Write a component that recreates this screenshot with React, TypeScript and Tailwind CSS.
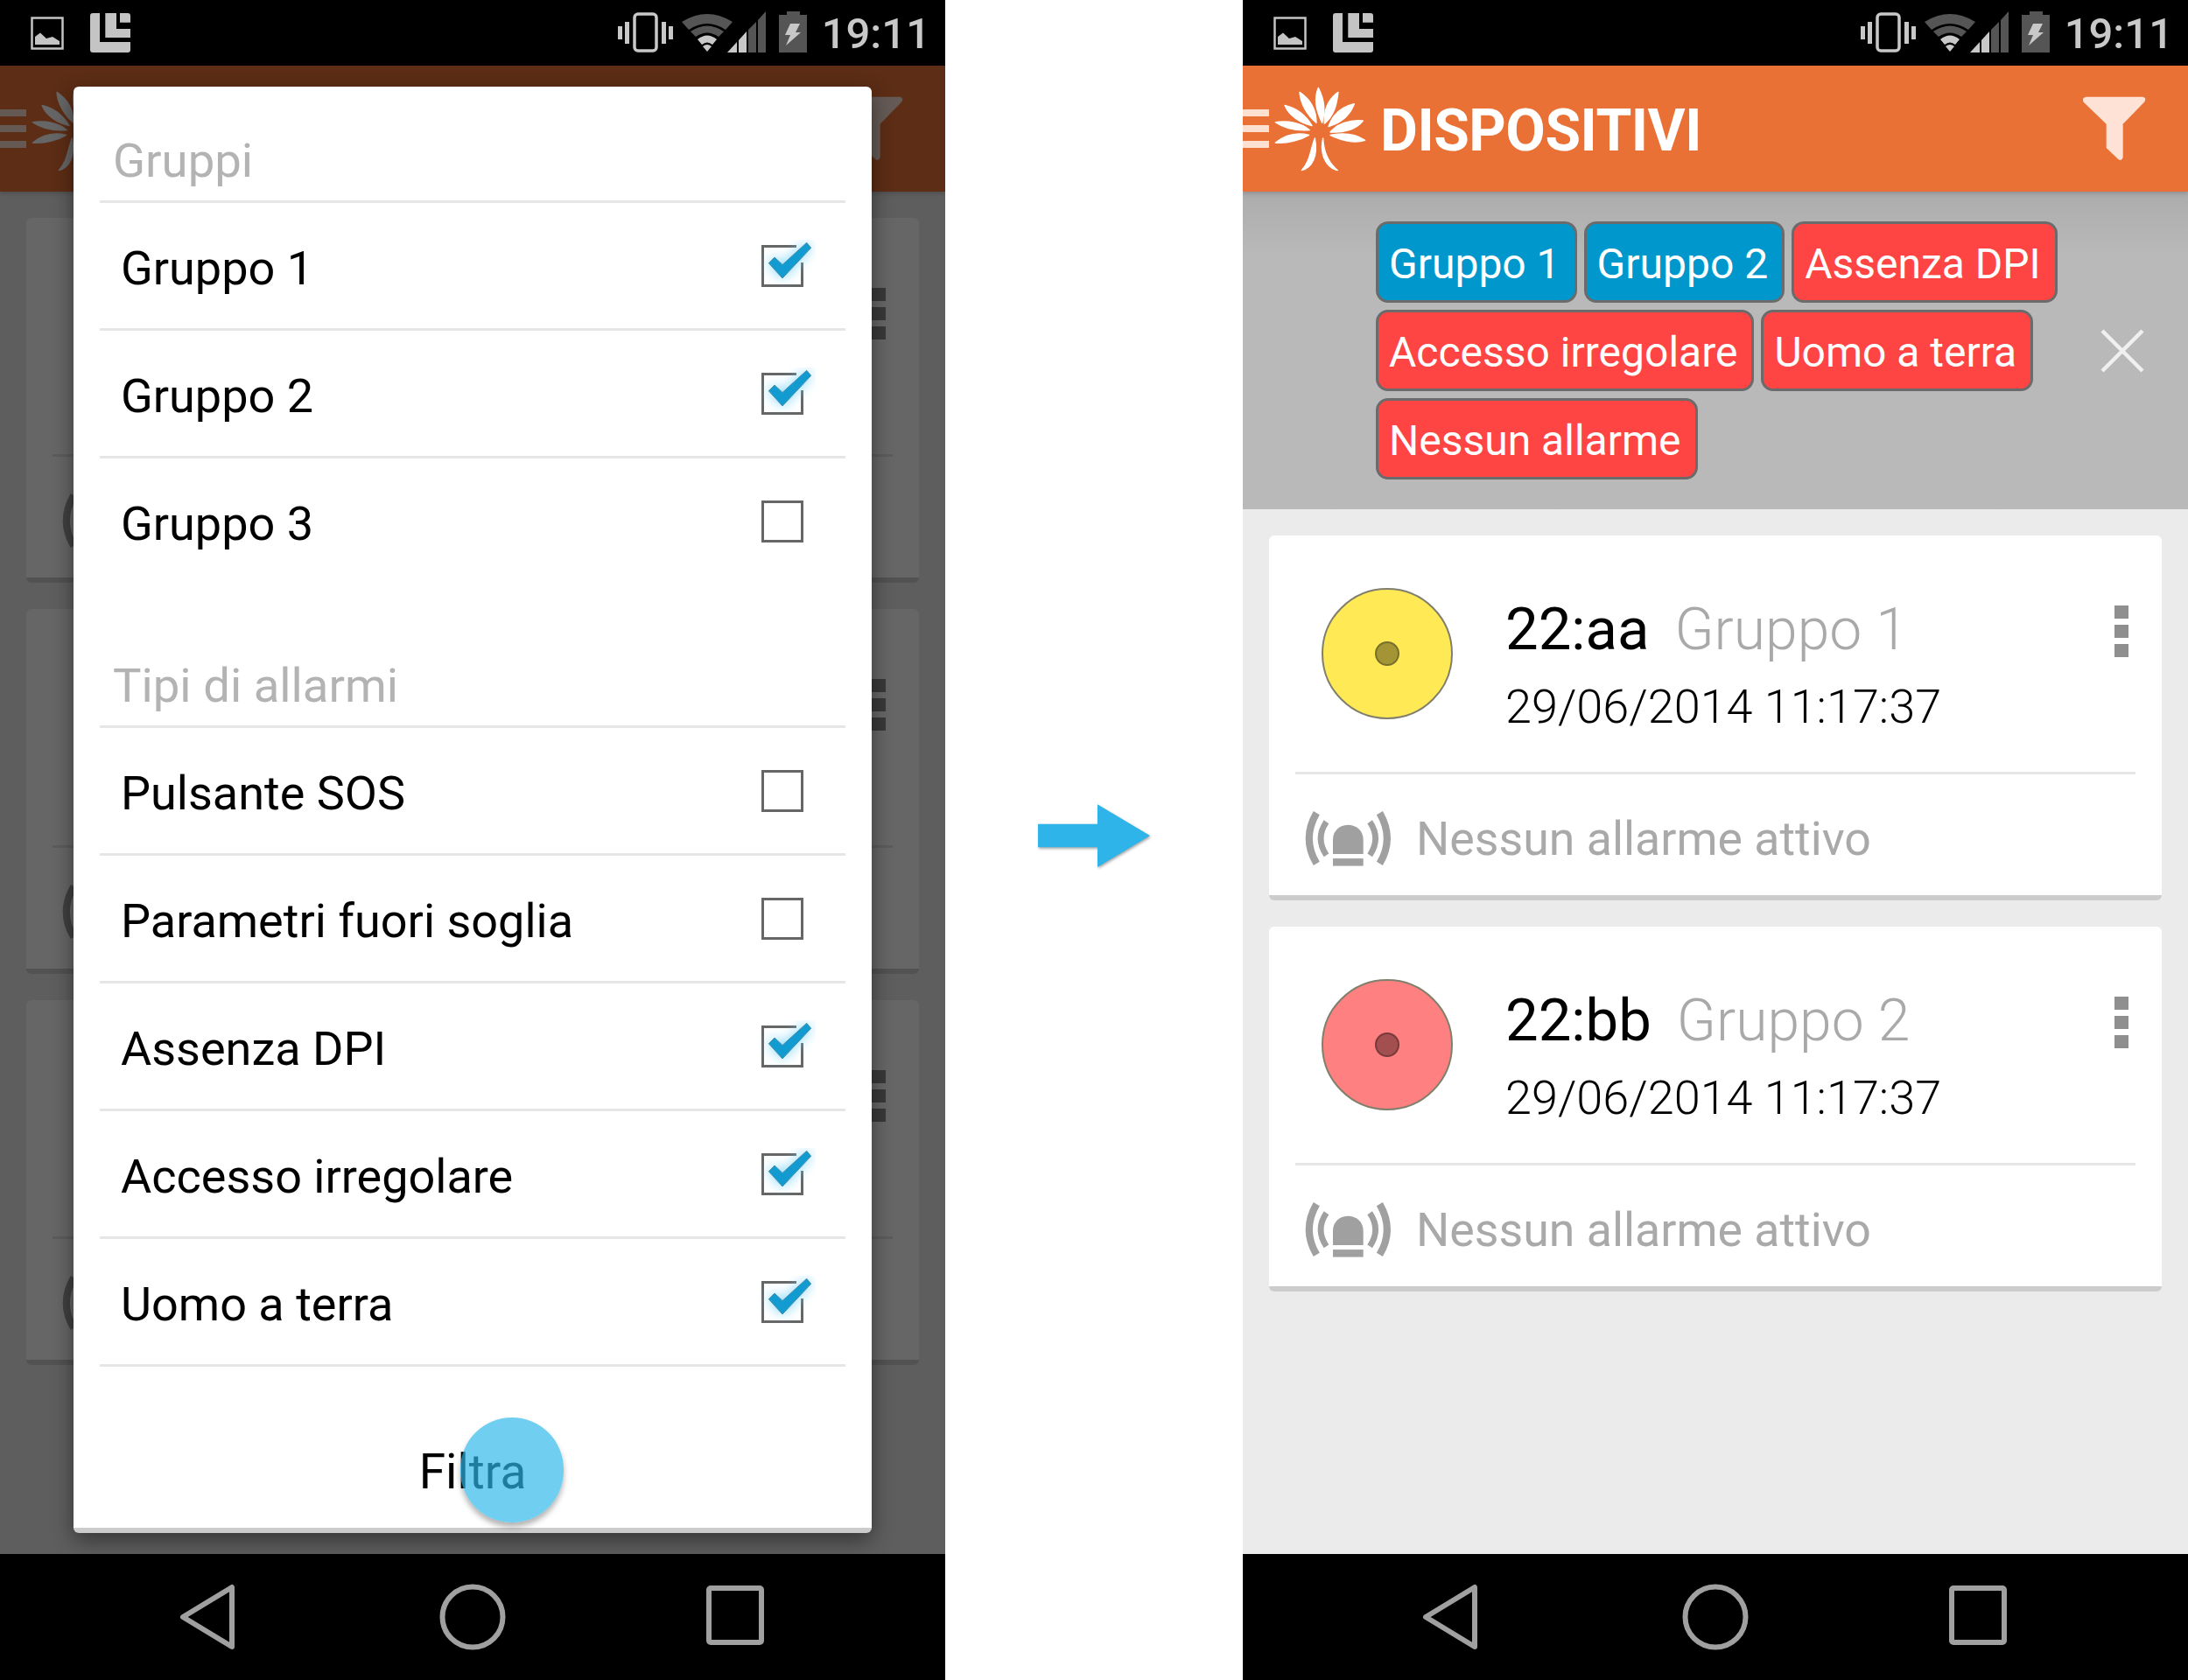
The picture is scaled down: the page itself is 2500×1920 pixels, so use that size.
import React from "react";

const PETALS = [
  "M262 120C245 160 255 200 275 240C285 200 285 165 262 120Z",
  "M198 135C200 175 225 215 255 240C255 195 235 160 198 135Z",
  "M330 135C295 160 280 200 283 243C315 215 325 180 330 135Z",
  "M147 180C160 215 200 240 240 250C220 215 190 190 147 180Z",
  "M385 175C340 185 310 215 297 253C340 240 370 215 385 175Z",
  "M115 238C150 262 195 268 232 265C205 240 160 232 115 238Z",
  "M415 233C370 228 325 245 303 272C345 275 390 265 415 233Z",
  "M115 308C155 312 200 300 230 282C190 272 150 280 115 308Z",
  "M422 300C385 275 340 275 303 282C335 300 385 312 422 300Z",
  "M205 403C240 395 262 355 250 293C235 330 235 370 205 403Z",
  "M328 403C290 395 265 350 278 293C280 340 295 375 328 403Z",
];

function StatusBar() {
  return (
    <div className="h-[75px] shrink-0 bg-black flex items-start">
      {/* picture */}
      <svg className="mt-[19px] ml-[35px]" width="38" height="38" viewBox="0 0 38 38">
        <rect x="1.5" y="1.5" width="35" height="35" fill="none" stroke="#c4c4c4" strokeWidth="2.5" />
        <path d="M5 32V23L11 18.5L18 25L25 23L33 28V32Z" fill="#c4c4c4" />
      </svg>
      {/* L icon */}
      <svg className="mt-[15px] ml-[30px]" width="46" height="45" viewBox="0 0 46 45">
        <path d="M3 0H11V33H46V42Q46 45 43 45H3Q0 45 0 42V3Q0 0 3 0Z" fill="#c4c4c4" />
        <path d="M17.3 0H30V18H46V28H17.3Z" fill="#c4c4c4" />
        <path d="M34 0H43Q46 0 46 3V10.7H34Z" fill="#c4c4c4" />
      </svg>
      <svg className="ml-auto mt-[10px]" width="233" height="54" viewBox="0 0 233 54">
        {/* vibrate */}
        <rect x="19" y="6" width="25" height="42" rx="4" fill="none" stroke="#c8c8c8" strokeWidth="3.5" />
        <rect x="0" y="20" width="5" height="15" fill="#c8c8c8" />
        <rect x="8" y="15" width="5" height="25" fill="#c8c8c8" />
        <rect x="50" y="15" width="5" height="25" fill="#c8c8c8" />
        <rect x="58" y="20" width="5" height="15" fill="#c8c8c8" />
        {/* wifi */}
        <path d="M73 15Q102 -3 131 15L123 24Q102 10 81 24Z" fill="#555" />
        <path d="M83 26Q102 13 121 26L115 32Q102 23 89 32Z" fill="#555" />
        <path d="M91 35Q102 26 113 35L108 41Q102 36 96 41Z" fill="#c8c8c8" />
        <path d="M97 43Q102 39 107 43L102 49Z" fill="#c8c8c8" />
        {/* signal */}
        <path d="M125 50L136 38V50Z" fill="#c8c8c8" />
        <path d="M138 36L147 26V50H138Z" fill="#c8c8c8" />
        <path d="M149 24L158 15V50H149Z" fill="#555" />
        <path d="M160 13L169 3V50H160Z" fill="#555" />
        {/* battery */}
        <path d="M193 7V3H208V7H216V50H184V7Z" fill="#555" />
        <path d="M197 17H208L203 27H209L192 42L197 30H191Z" fill="#c8c8c8" />
      </svg>
      <span className="mr-[17px] mt-[11px] text-[49px] leading-[55px] font-medium text-[#c8c8c8] font-['Roboto',sans-serif]">
        19:11
      </span>
    </div>
  );
}

function NavBar() {
  return (
    <div className="h-[144px] shrink-0 bg-black flex items-center">
      <svg className="ml-[197px]" width="80" height="80" viewBox="0 0 80 80">
        <path d="M68 6V74L12 40Z" fill="none" stroke="#a0a0a0" strokeWidth="6" strokeLinejoin="round" />
      </svg>
      <svg className="ml-[223px]" width="80" height="80" viewBox="0 0 80 80">
        <circle cx="40" cy="40" r="34.5" fill="none" stroke="#a0a0a0" strokeWidth="6" />
      </svg>
      <svg className="ml-[220px]" width="80" height="80" viewBox="0 0 80 80">
        <rect x="10" y="7" width="60" height="62" rx="2" fill="none" stroke="#a0a0a0" strokeWidth="6" />
      </svg>
    </div>
  );
}

function AppHeader({ covered }: { covered?: boolean }) {
  return (
    <div className="relative z-10 h-[144px] shrink-0 bg-[#e97135] flex items-center shadow-[0_2px_5px_rgba(0,0,0,0.18)]">
      <div className="w-[30px] flex flex-col gap-[10px]">
        <div className="h-[8px] bg-[#fde0d0]" />
        <div className="h-[8px] bg-[#fde0d0]" />
        <div className="h-[8px] bg-[#fde0d0]" />
      </div>
      <svg className="ml-[4px]" width="112" height="100" viewBox="105 110 336 300">
        {PETALS.map((d) => (
          <path key={d} d={d} fill="#ffffff" stroke="#ffffff" strokeWidth="4" strokeLinejoin="round" />
        ))}
      </svg>
      {!covered && (
        <span className="ml-[11px] mt-[6px] text-[66px] leading-none font-bold text-white tracking-[-0.5px] font-['Roboto',sans-serif]">
          DISPOSITIVI
        </span>
      )}
      <svg className="ml-auto mr-[20px] mt-[6px]" width="120" height="110" viewBox="0 0 360 330">
        <path
          d="M70 47H265Q280 50 270 65L197 140V255Q192 270 180 260L140 222V140L62 65Q55 50 70 47Z"
          fill="#fde2d5"
        />
      </svg>
    </div>
  );
}

function Chip({ label, color }: { label: string; color: "blue" | "red" }) {
  return (
    <div
      className={
        "h-[93px] pt-[5px] pl-[12px] pr-[16px] rounded-[14px] border-[3px] border-[#6b6b6b] flex items-center text-[48px] text-white font-['Roboto',sans-serif] " +
        (color === "blue" ? "bg-[#0098cc]" : "bg-[#ff4444]")
      }
    >
      {label}
    </div>
  );
}

function FilterBar() {
  return (
    <div className="h-[363px] shrink-0 bg-linear-to-b from-[#acacac] to-[#b9b9b9] to-[20%] flex items-center pl-[152px]">
      <div className="w-[800px] flex flex-wrap gap-[8px]">
        <Chip label="Gruppo 1" color="blue" />
        <Chip label="Gruppo 2" color="blue" />
        <Chip label="Assenza DPI" color="red" />
        <Chip label="Accesso irregolare" color="red" />
        <Chip label="Uomo a terra" color="red" />
        <Chip label="Nessun allarme" color="red" />
      </div>
      <svg className="ml-[28px]" width="50" height="50" viewBox="0 0 50 50">
        <path d="M2 2L48 48M48 2L2 48" stroke="#f0f0f0" strokeWidth="4.5" />
      </svg>
    </div>
  );
}

function AlarmIcon() {
  return (
    <svg width="102" height="68" viewBox="60 70 300 200">
      <path d="M105 82Q55 168 105 252M317 82Q367 168 317 252" fill="none" stroke="#a0a0a0" strokeWidth="24" />
      <path d="M138 112Q100 168 138 224M284 112Q322 168 284 224" fill="none" stroke="#a0a0a0" strokeWidth="20" />
      <path d="M160 220V172C160 140 185 122 211 122C237 122 262 140 262 172V220Z" fill="#a0a0a0" />
      <rect x="160" y="235" width="102" height="25" fill="#a0a0a0" />
    </svg>
  );
}

type Device = { id: string; group: string; fill: string; dot: string };

function DeviceCard({ device, covered }: { device: Device; covered?: boolean }) {
  return (
    <div className="h-[417px] shrink-0 mb-[30px] bg-white rounded-[6px] border-b-[6px] border-[#cccccc] flex flex-col font-['Roboto',sans-serif]">
      <div className="h-[270px] flex items-start">
        <div
          className={"mt-[60px] ml-[60px] w-[150px] h-[150px] rounded-full border-2 border-[#807f6c] flex items-center justify-center " + device.fill}
        >
          <div className={"w-[28px] h-[28px] rounded-full border-2 " + device.dot} />
        </div>
        {/* the dialog hides the text of the cards behind it */}
        {!covered && (
          <div className="ml-[60px] flex flex-col">
            <div className="mt-[67px] flex items-baseline leading-[80px]">
              <span className="text-[67px] text-black">{device.id}</span>
              <span className="ml-[29px] text-[66px] font-light text-[#a9a9a9]">{device.group}</span>
            </div>
            <div className="mt-[13px] text-[54px] leading-[70px] font-light text-black">29/06/2014 11:17:37</div>
          </div>
        )}
        <div className="ml-auto mr-[38px] mt-[80px] flex flex-col gap-[7px]">
          <div className="w-[16px] h-[15px] bg-[#8f8f8f]" />
          <div className="w-[16px] h-[15px] bg-[#8f8f8f]" />
          <div className="w-[16px] h-[15px] bg-[#8f8f8f]" />
        </div>
      </div>
      <div className="mx-[30px] h-[3px] bg-[#e6e6e6]" />
      <div className="flex-1 flex items-center pl-[39px] pt-[10px]">
        <AlarmIcon />
        {!covered && <span className="ml-[27px] text-[53.7px] text-[#a9a9a9]">Nessun allarme attivo</span>}
      </div>
    </div>
  );
}

function CheckBox({ checked }: { checked: boolean }) {
  return (
    <svg width="66" height="60" viewBox="0 0 66 60">
      {checked ? (
        <>
          <path d="M44 7.5H5.5V52.5H50.5V26" fill="none" stroke="#666666" strokeWidth="3" />
          <path
            d="M12.3 26.7L19 20L28 28.5L55.7 3.3L60.7 9.3L28 44Z"
            fill="#129bd0"
            stroke="#4d8fa8"
            strokeWidth="1"
            className="drop-shadow-[0_0_7px_#7fd6f8]"
          />
        </>
      ) : (
        <rect x="5.5" y="7.5" width="45" height="45" fill="none" stroke="#666666" strokeWidth="3" />
      )}
    </svg>
  );
}

function OptionRow({ label, checked, last }: { label: string; checked?: boolean; last?: boolean }) {
  return (
    <div
      className={
        "h-[146px] pl-[24px] pr-[34px] flex items-center justify-between text-[54px] text-black border-b-[3px] " +
        (last ? "border-transparent" : "border-[#e6e6e6]")
      }
    >
      <span className="mt-[5px]">{label}</span>
      <CheckBox checked={!!checked} />
    </div>
  );
}

function FilterDialog() {
  return (
    <div className="relative mt-[24px] w-[912px] h-[1653px] bg-white rounded-[6px] border-b-[6px] border-[#cccccc] shadow-[0_8px_24px_rgba(0,0,0,0.45)] font-['Roboto',sans-serif]">
      <div className="mx-[30px]">
        <div className="h-[133px] pl-[15px] pb-[16px] flex items-end border-b-[3px] border-[#e6e6e6] text-[54.5px] leading-[60px] text-[#b3b3b3]">
          Gruppi
        </div>
        <OptionRow label="Gruppo 1" checked />
        <OptionRow label="Gruppo 2" checked />
        <OptionRow label="Gruppo 3" last />
        <div className="h-[162px] pl-[15px] pb-[16px] flex items-end border-b-[3px] border-[#e6e6e6] text-[54.5px] leading-[60px] text-[#b3b3b3]">
          Tipi di allarmi
        </div>
        <OptionRow label="Pulsante SOS" />
        <OptionRow label="Parametri fuori soglia" />
        <OptionRow label="Assenza DPI" checked />
        <OptionRow label="Accesso irregolare" checked />
        <OptionRow label="Uomo a terra" checked />
      </div>
      <div className="h-[184px] pt-[57px] flex items-center justify-center text-[55px] text-black">Filtra</div>
      {/* touch ripple over the button */}
      <div className="absolute left-[442px] bottom-[6px] w-[118px] h-[120px] rounded-full bg-[#2cb8e9]/68 shadow-[0_5px_6px_rgba(0,0,0,0.3)]" />
    </div>
  );
}

const DEVICES: Device[] = [
  { id: "22:aa", group: "Gruppo 1", fill: "bg-[#ffe955]", dot: "bg-[#a39535] border-[#786f2c]" },
  { id: "22:bb", group: "Gruppo 2", fill: "bg-[#ff8080]", dot: "bg-[#a34f4f] border-[#783a3a]" },
  { id: "22:cc", group: "Gruppo 3", fill: "bg-[#ff8080]", dot: "bg-[#a34f4f] border-[#783a3a]" },
];

function Screen({ dialog }: { dialog?: boolean }) {
  return (
    <div className="w-[1080px] h-[1920px] shrink-0 flex flex-col overflow-hidden">
      <StatusBar />
      <div className="relative flex-1 min-h-0 flex flex-col bg-[#ebebeb]">
        <AppHeader covered={dialog} />
        {!dialog && <FilterBar />}
        <div className="flex-1 min-h-0 px-[30px] pt-[30px] overflow-hidden">
          {(dialog ? DEVICES : DEVICES.slice(0, 2)).map((d) => (
            <DeviceCard key={d.id} device={d} covered={dialog} />
          ))}
        </div>
        {dialog && (
          <div className="absolute inset-0 z-20 bg-black/60 flex justify-center items-start">
            <FilterDialog />
          </div>
        )}
      </div>
      <NavBar />
    </div>
  );
}

export default function App() {
  return (
    <div className="w-[2500px] h-[1920px] bg-white flex overflow-hidden">
      <Screen dialog />
      <div className="w-[340px] shrink-0 flex items-center justify-center">
        <svg width="200" height="160" viewBox="0 0 600 480">
          <path
            d="M108 185H312V118L492 225L312 333V265H108Z"
            fill="#2eb4e8"
            className="drop-shadow-[3px_5px_4px_rgba(0,0,0,0.35)]"
          />
        </svg>
      </div>
      <Screen />
    </div>
  );
}
